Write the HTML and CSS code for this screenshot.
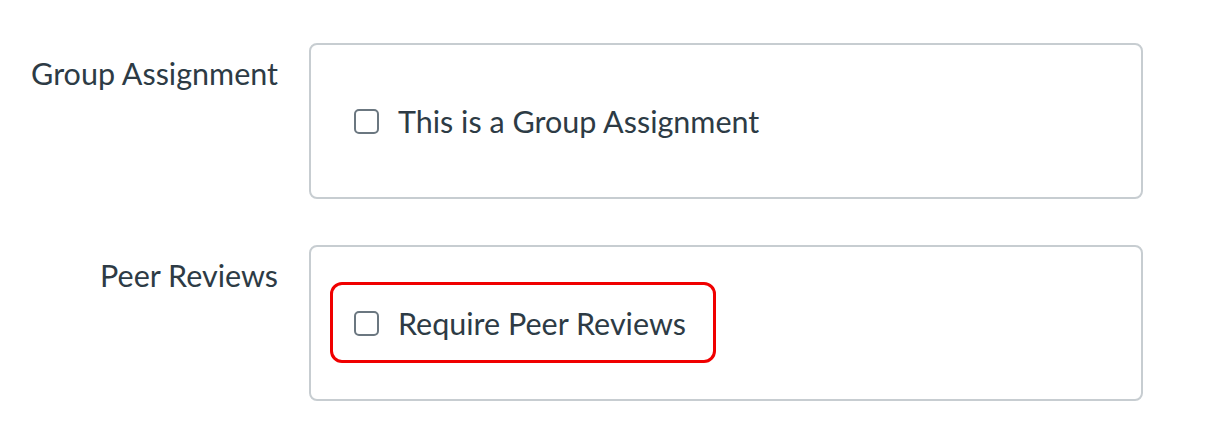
FILE: index.html
```html
<!DOCTYPE html>
<html>
<head>
<meta charset="utf-8">
<link rel="stylesheet" href="styles.css">
</head>
<body>
<div class="form">
  <div class="row">
    <div class="label">Group Assignment</div>
    <div class="box">
      <label class="check"><span class="checkbox"></span><span class="check-text">This is a Group Assignment</span></label>
    </div>
  </div>
  <div class="row">
    <div class="label">Peer Reviews</div>
    <div class="box">
      <label class="check"><span class="checkbox"></span><span class="check-text">Require Peer Reviews</span></label>
      <div class="highlight"></div>
    </div>
  </div>
</div>
</body>
</html>
```
FILE: styles.css
```css
html, body {
  margin: 0;
  padding: 0;
  background: #ffffff;
}
body {
  font-family: Lato, "Noto Sans", sans-serif;
  color: #2d3b45;
  width: 1224px;
  height: 434px;
  overflow: hidden;
}
.form {
  display: flex;
  flex-direction: column;
  gap: 46px;
  padding-top: 43px;
}
.row {
  display: flex;
  align-items: flex-start;
  gap: 31px;
}
.label {
  width: 278px;
  text-align: right;
  font-size: 30.5px;
  line-height: 34px;
  margin-top: 13px;
}
.box {
  position: relative;
  width: 834px;
  height: 156px;
  box-sizing: border-box;
  border: 2px solid #c7cdd1;
  border-radius: 8px;
  display: flex;
  align-items: center;
  padding-left: 43px;
}
.check {
  display: flex;
  align-items: center;
  gap: 19px;
  font-size: 30.5px;
  line-height: 34px;
}
.checkbox {
  width: 25px;
  height: 25px;
  box-sizing: border-box;
  border: 2px solid #6b7780;
  border-radius: 5px;
  background: #fff;
}
.highlight {
  position: absolute;
  left: 19px;
  top: 35px;
  width: 386px;
  height: 81px;
  box-sizing: border-box;
  border: 3px solid #f00000;
  border-radius: 12px;
}
```
